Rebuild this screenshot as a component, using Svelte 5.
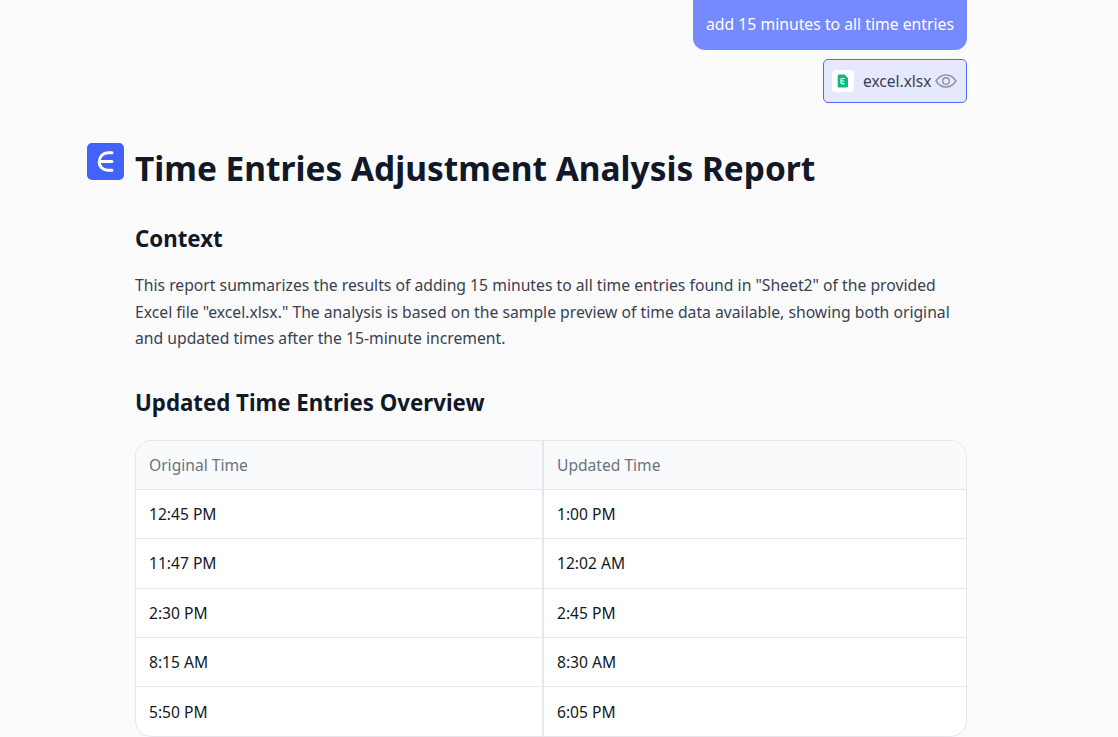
<script>
  const rows = [
    ["12:45 PM", "1:00 PM"],
    ["11:47 PM", "12:02 AM"],
    ["2:30 PM", "2:45 PM"],
    ["8:15 AM", "8:30 AM"],
    ["5:50 PM", "6:05 PM"]
  ];
</script>

<div class="page">
  <div class="user">
    <div class="bubble">add 15 minutes to all time entries</div>
    <div class="file">
      <span class="file-icon">
        <svg width="12" height="14" viewBox="0 0 12 14">
          <path d="M2 0.5h5.5L11 4v8.2a1.3 1.3 0 0 1-1.3 1.3H2A1.3 1.3 0 0 1 0.7 12.2V1.8A1.3 1.3 0 0 1 2 0.5z" fill="#0cbb7b" />
          <path d="M4 4.5h3.6M4 7h3.2M4 9.6h3.6M4 4.5v5.1" stroke="#fff" stroke-width="1.1" fill="none" />
        </svg>
      </span>
      <span class="file-name">excel.xlsx</span>
      <svg class="eye" width="22" height="14" viewBox="0 0 22 14" fill="none" stroke="#8f939c" stroke-width="1.4">
        <path d="M1 7C3.5 3.2 7 1 11 1s7.5 2.2 10 6c-2.5 3.8-6 6-10 6S3.5 10.800 1 7z" />
        <circle cx="11" cy="7" r="3.3" />
      </svg>
    </div>
  </div>

  <div class="answer">
    <div class="logo">
      <svg width="37" height="37" viewBox="0 0 37 37">
        <rect width="37" height="37" rx="5" fill="#4361fb" />
        <path d="M25 9.700h-4c-5 0-8.500 3.800-8.800 8.800s3.800 8.800 8.800 8.800h4M12.500 18.500h12.500" stroke="#fff" stroke-width="3" fill="none" stroke-linecap="round" />
      </svg>
    </div>
    <div class="body">
      <h1>Time Entries Adjustment Analysis Report</h1>
      <h2 class="context">Context</h2>
      <p>This report summarizes the results of adding 15 minutes to all time entries found in "Sheet2" of the provided Excel file "excel.xlsx." The analysis is based on the sample preview of time data available, showing both original and updated times after the 15-minute increment.</p>
      <h2 class="overview">Updated Time Entries Overview</h2>
      <div class="table-wrap">
        <table>
          <thead>
            <tr><th>Original Time</th><th>Updated Time</th></tr>
          </thead>
          <tbody>
            {#each rows as row}
              <tr><td>{row[0]}</td><td>{row[1]}</td></tr>
            {/each}
          </tbody>
        </table>
      </div>
    </div>
  </div>
</div>

<style>
  :global(body) {
    background: #fbfbfc;
    overflow: hidden;
  }
  .page {
    width: 1118px;
    height: 737px;
    overflow: hidden;
    font-family: "Noto Sans", sans-serif;
    color: #111827;
  }
  .user {
    display: flex;
    flex-direction: column;
    align-items: flex-end;
    width: 967px;
    margin-top: -12px;
  }
  .bubble {
    background: #758aff;
    color: #fff;
    font-size: 15.75px;
    line-height: 24px;
    padding: 24px 13px 14px;
    border-radius: 12px;
  }
  .file {
    display: flex;
    align-items: center;
    box-sizing: border-box;
    width: 144px;
    height: 44px;
    margin-top: 9px;
    padding-left: 8px;
    background: #e6e9fe;
    border: 1px solid #4d6bf2;
    border-radius: 5px;
  }
  .file-icon {
    display: flex;
    align-items: center;
    justify-content: center;
    width: 22px;
    height: 22px;
    background: #fff;
    border-radius: 4px;
  }
  .file-name {
    margin-left: 9px;
    font-size: 15.5px;
    color: #374151;
  }
  .eye {
    margin-left: 4px;
  }
  .answer {
    display: flex;
    margin-top: 40px;
    margin-left: 87px;
    width: 880px;
  }
  .logo {
    width: 37px;
    height: 37px;
    margin-right: 11px;
    flex-shrink: 0;
  }
  .logo svg {
    display: block;
  }
  .body {
    flex: 1;
    min-width: 0;
  }
  h1 {
    margin: -1px 0 0;
    font-size: 33.45px;
    line-height: 52px;
    font-weight: 700;
  }
  h2 {
    margin: 0;
    font-size: 22.25px;
    line-height: 32px;
    font-weight: 700;
  }
  .context {
    margin-top: 29px;
  }
  p {
    margin: 17px 0 0;
    font-size: 15.72px;
    line-height: 26.6px;
    color: #374151;
  }
  .overview {
    margin-top: 35px;
  }
  .table-wrap {
    margin-top: 21px;
    border: 1px solid #e5e7eb;
    border-radius: 16px;
    overflow: hidden;
    background: #fff;
  }
  table {
    width: 100%;
    border-collapse: collapse;
    table-layout: fixed;
    font-size: 15.6px;
  }
  th, td {
    height: 49.4px;
    box-sizing: border-box;
    padding: 0 13px;
    text-align: left;
    font-weight: 400;
    border-bottom: 1px solid #e5e7eb;
    border-right: 2px solid #e5e7eb;
  }
  th {
    height: 48.6px;
    background: #f9fafb;
    color: #6b7280;
  }
  th:first-child, td:first-child {
    width: 407px;
  }
  th:last-child, td:last-child {
    border-right: 0;
  }
  tr:last-child td {
    border-bottom: 0;
  }
</style>
